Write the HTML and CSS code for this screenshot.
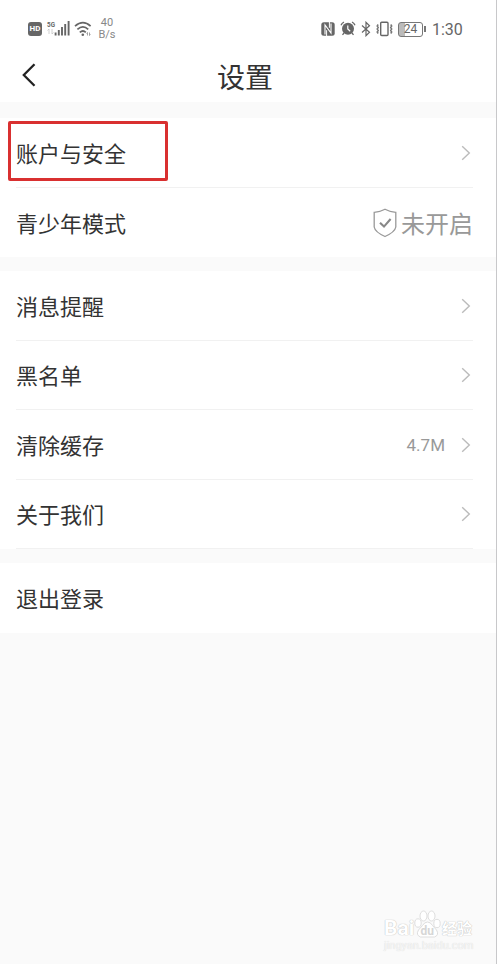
FILE: index.html
```html
<!DOCTYPE html>
<html lang="zh-CN">
<head>
  <meta charset="UTF-8" />
  <meta name="viewport" content="width=device-width, initial-scale=1" />
  <title>设置</title>
  <link rel="stylesheet" href="styles.css">
</head>
<body>
<div class="phone">
  <header>
    <div class="status-bar">
      <div class="status-left">
        <span class="hd">HD</span>
        <svg class="signal" width="25" height="18" viewBox="0 0 25 18">
          <text class="net" x="1" y="7.5" textLength="8" lengthAdjust="spacingAndGlyphs">5G</text>
          <path d="M3 10v5M1.500 11.500l1.500-1.500M6 10v5l1.500-1.500" stroke="#c4c4c4" stroke-width=".8" fill="none" />
          <path d="M9.600 13.500V16.500M12.800 11V16.500M16 8V16.500M19.200 5V16.500M22.600 2V16.500" stroke="#666" stroke-width="1.900" />
        </svg>
        <svg class="wifi" width="19" height="16" viewBox="0 0 19 16">
          <g fill="none" stroke="#666" stroke-width="1.700">
            <path d="M1 5.200Q9 -1.800 16.600 5.200" />
            <path d="M3.400 8.400Q9 3.200 14.200 8.400" />
            <path d="M5.800 11.400Q9 8.600 11.800 11.400" />
          </g>
          <circle cx="8.800" cy="13.800" r="1.300" fill="#666" />
          <path d="M13.500 11.500v3M12.500 12.500l1-1M15.500 11.500v3l1-1" stroke="#999" stroke-width=".9" fill="none" />
        </svg>
        <div class="speed"><span>40</span><span>B/s</span></div>
      </div>
      <div class="status-right">
        <svg class="nfc" width="14" height="14" viewBox="0 0 14 14">
          <rect x=".3" y=".3" width="13.400" height="13.400" rx="2.500" fill="#666" />
          <path d="M4 12.500V3l6 8V1.500" stroke="#fff" stroke-width="1.100" fill="none" />
          <path d="M5.600 14V8.200M8.400 0v5.800" stroke="#fff" stroke-width="1" fill="none" />
        </svg>
        <svg class="alarm" width="16" height="15" viewBox="0 0 16 15">
          <circle cx="8" cy="7.800" r="6" fill="#666" />
          <path d="M1 4.200Q1.800 2 4 1M15 4.200Q14.200 2 12 1M4 12l-1.500 1.800M12 12l1.500 1.800" stroke="#666" stroke-width="1.300" fill="none" />
          <path d="M7.800 4.600v3.400l2.400 2.200" stroke="#fff" stroke-width="1.200" fill="none" />
        </svg>
        <svg class="bluetooth" width="10" height="16" viewBox="0 0 10 16">
          <path d="M1 4.500l7.500 6.700L5 14.700V1.300l3.500 3.500L1 11.500" stroke="#666" stroke-width="1.200" fill="none" />
        </svg>
        <svg class="vibrate" width="19" height="16" viewBox="0 0 19 16">
          <rect x="5.700" y="1.200" width="7.300" height="13.300" rx="1" stroke="#666" stroke-width="1.400" fill="none" />
          <path d="M3.200 3.500l-1 1.500 1 1.500-1 1.500 1 1.500-1 1.500 1 1.500M15.700 3.500l1 1.500-1 1.500 1 1.500-1 1.500 1 1.500-1 1.500" stroke="#777" stroke-width="1.500" fill="none" />
        </svg>
        <span class="battery">24</span>
        <span class="battery-tip"></span>
        <span class="time">1:30</span>
      </div>
    </div>
    <div class="title-bar">
      <svg class="back" width="16" height="26" viewBox="0 0 16 26">
        <path d="M13.500 2.200L2.800 13L13.500 23.800" fill="none" stroke="#222" stroke-width="2.300" />
      </svg>
      <h1>设置</h1>
    </div>
  </header>

  <div class="group">
    <div class="row">
      <span class="label">账户与安全</span>
      <svg class="arrow" width="10" height="16" viewBox="0 0 10 16"><path d="M1.200 1.300L8.300 8L1.200 14.700" /></svg>
      <div class="highlight"></div>
    </div>
    <div class="row last">
      <span class="label">青少年模式</span>
      <svg class="shield" width="24" height="30" viewBox="0 0 24 30">
        <path d="M12 1.200Q16.500 3.700 22.800 4.300V19Q22 24 12 28.500Q2 24 1.200 19V4.300Q7.500 3.700 12 1.200z" fill="none" stroke="#999" stroke-width="1.300" />
        <path d="M7 14.800l4 3.800L17.600 11" fill="none" stroke="#888" stroke-width="2.100" />
      </svg>
      <span class="state">未开启</span>
    </div>
  </div>

  <div class="group">
    <div class="row">
      <span class="label">消息提醒</span>
      <svg class="arrow" width="10" height="16" viewBox="0 0 10 16"><path d="M1.200 1.300L8.300 8L1.200 14.700" /></svg>
    </div>
    <div class="row">
      <span class="label">黑名单</span>
      <svg class="arrow" width="10" height="16" viewBox="0 0 10 16"><path d="M1.200 1.300L8.300 8L1.200 14.700" /></svg>
    </div>
    <div class="row">
      <span class="label">清除缓存</span>
      <span class="size">4.7M</span>
      <svg class="arrow" width="10" height="16" viewBox="0 0 10 16"><path d="M1.200 1.300L8.300 8L1.200 14.700" /></svg>
    </div>
    <div class="row">
      <span class="label">关于我们</span>
      <svg class="arrow" width="10" height="16" viewBox="0 0 10 16"><path d="M1.200 1.300L8.300 8L1.200 14.700" /></svg>
    </div>
  </div>

  <div class="group">
    <div class="row last">
      <span class="label">退出登录</span>
    </div>
  </div>

  <div class="watermark">
    <div class="logo">
      <span class="bai">Bai</span>
      <svg width="27" height="28" viewBox="0 0 27 28">
        <g fill="#fff" stroke="#dedede" stroke-width="1">
          <ellipse cx="4" cy="13" rx="3.200" ry="4.200" />
          <ellipse cx="9.500" cy="6" rx="3.500" ry="5" />
          <ellipse cx="17.500" cy="6" rx="3.500" ry="5" />
          <ellipse cx="23" cy="13.500" rx="3.200" ry="4.200" />
          <path d="M13.500 12q3 0 5 3.500l4 4.500q3 5-2 7h-14q-5-2-2-7l4-4.500q2-3.500 5-3.500z" />
        </g>
        <text class="du" x="6.500" y="24.500">du</text>
      </svg>
      <span class="exp">经验</span>
    </div>
    <div class="site">jingyan.baidu.com</div>
  </div>
</div>
</body>
</html>
```
FILE: styles.css
```css
* { box-sizing: border-box; }
body {
  margin: 0;
  background: #fff;
  color: #333;
  font-family: Roboto, "Noto Sans CJK SC", sans-serif;
}
svg {
  display: block;
  flex-shrink: 0;
}
.phone {
  position: relative;
  width: 497px;
  height: 964px;
  background: #fafafa;
  border-right: 1px solid #c8c8ca;
  overflow: hidden;
}
header {
  height: 102px;
  background: #fff;
  margin-bottom: 16px;
}
.status-bar {
  height: 50px;
  padding: 8px 34px 0 28px;
  display: flex;
  justify-content: space-between;
  align-items: center;
  color: #666;
}
.status-left, .status-right {
  display: flex;
  align-items: center;
  height: 42px;
}
.hd {
  width: 14px;
  height: 14px;
  border-radius: 3px;
  background: #666;
  color: #fff;
  font-size: 8px;
  font-weight: bold;
  line-height: 14px;
  text-align: center;
}
.signal {
  margin-left: 4px;
  margin-bottom: 2px;
}
.net {
  font-size: 8px;
  font-weight: bold;
  fill: #666;
}
.wifi {
  margin-left: 3px;
  margin-bottom: 1px;
}
.speed {
  width: 18px;
  margin-left: 5px;
  display: flex;
  flex-direction: column;
  align-items: center;
  font-size: 11px;
  line-height: 12px;
  color: #888;
}
.nfc { margin-bottom: 1px; }
.alarm {
  margin-left: 5px;
  margin-bottom: 1px;
}
.bluetooth { margin-left: 5px; }
.vibrate { margin-left: 4px; }
.battery {
  width: 25px;
  height: 15px;
  margin-left: 4px;
  border: 1.500px solid #777;
  border-radius: 3px;
  background: linear-gradient(90deg, #bbb 25%, #fff 25%);
  font-size: 12px;
  line-height: 13px;
  text-align: center;
}
.battery-tip {
  width: 2px;
  height: 6px;
  margin-left: 1px;
  background: #777;
}
.time {
  margin-left: 6px;
  width: 30px;
  font-size: 16px;
  white-space: nowrap;
}
.title-bar {
  height: 50px;
  padding-left: 21px;
  display: flex;
  align-items: center;
}
h1 {
  margin: 0 0 0 180px;
  padding-top: 7px;
  font-size: 28px;
  line-height: 40px;
  font-weight: 400;
}
.group {
  background: #fff;
  padding: 0 23px 0 16px;
  margin-bottom: 14px;
}
.row {
  position: relative;
  height: 69.500px;
  padding-top: 1px;
  display: flex;
  align-items: center;
  border-bottom: 1px solid #f1f1f1;
}
.row.last {
  border-bottom: none;
}
.label {
  flex: 1;
  padding-top: 4px;
  font-size: 22px;
  line-height: 32px;
}
.arrow {
  margin-right: 2px;
}
.arrow path {
  fill: none;
  stroke: #bbb;
  stroke-width: 1.400;
}
.highlight {
  position: absolute;
  left: -8px;
  top: 3px;
  width: 160px;
  height: 60px;
  border: 3px solid #d93030;
  border-radius: 2px;
}
.state {
  margin-left: 4px;
  padding-top: 4px;
  font-size: 24px;
  line-height: 34px;
  color: #999;
}
.size {
  margin-right: 16px;
  padding-top: 1px;
  font-size: 17px;
  color: #999;
}
.watermark {
  position: absolute;
  left: 384px;
  top: 909px;
  width: 90px;
  color: #fff;
}
.logo {
  display: flex;
  align-items: flex-end;
  height: 29px;
}
.bai, .exp {
  text-shadow: 0 0 1px #bbb, 0 0 1px #ccc;
}
.bai {
  width: 30px;
  font-size: 21px;
  line-height: 20px;
  font-weight: bold;
}
.du {
  font-size: 12px;
  font-weight: bold;
  fill: #d6d6d6;
}
.exp {
  margin-left: 1px;
  font-size: 15px;
  line-height: 17px;
  font-weight: bold;
}
.site {
  font-size: 11px;
  line-height: 16px;
  color: #f6f6f6;
  text-shadow: 0 0 1px #d2d2d2;
}
```
